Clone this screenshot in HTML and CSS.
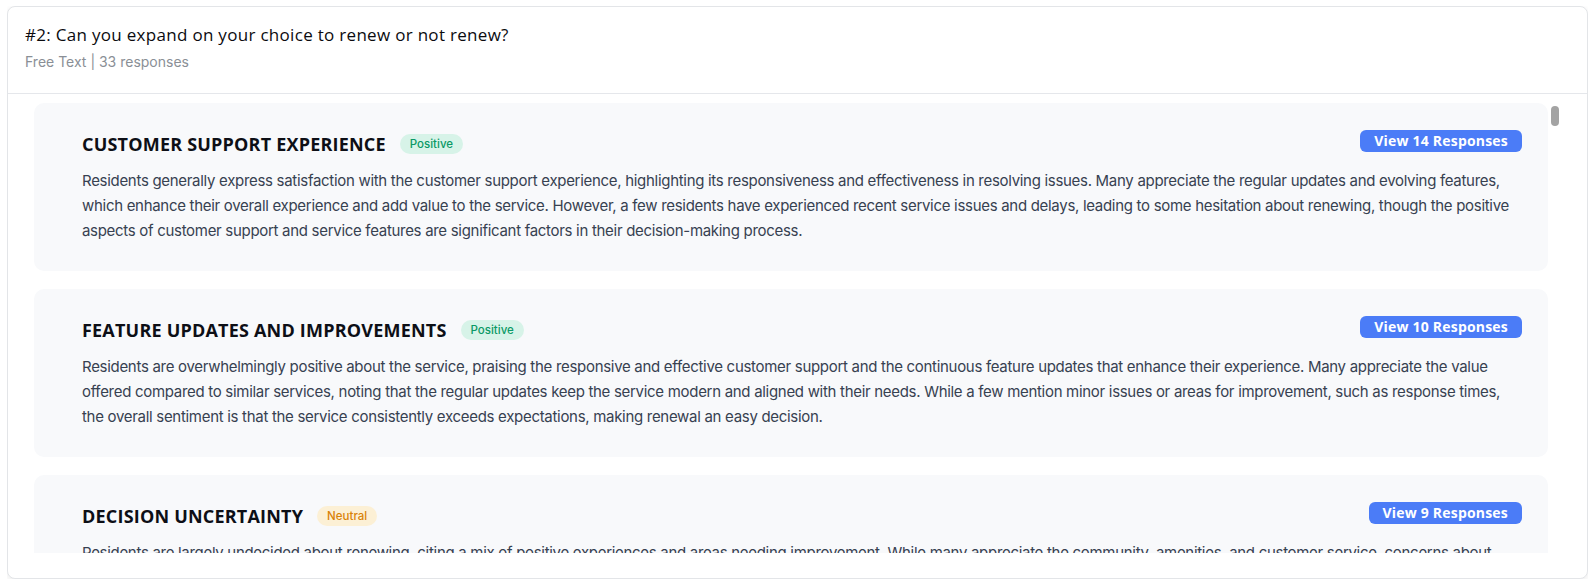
FILE: index.html
```html
<!DOCTYPE html>
<html lang="en">
<head>
<meta charset="utf-8">
<title>Question summary</title>
<link rel="stylesheet" href="styles.css">
</head>
<body>
<section class="panel">
  <header class="panel-head">
    <h2 class="question">#2: Can you expand on your choice to renew or not renew?</h2>
    <p class="meta">Free Text | 33 responses</p>
  </header>
  <div class="panel-body">
    <div class="scroll">
      <article class="theme">
        <div class="theme-row">
          <div class="theme-title">
            <h3>CUSTOMER SUPPORT EXPERIENCE</h3>
            <span class="badge badge-positive">Positive</span>
          </div>
          <button class="view-btn">View 14 Responses</button>
        </div>
        <p class="theme-text">Residents generally express satisfaction with the customer support experience, highlighting its responsiveness and effectiveness in resolving issues. Many appreciate the regular updates and evolving features, which enhance their overall experience and add value to the service. However, a few residents have experienced recent service issues and delays, leading to some hesitation about renewing, though the positive aspects of customer support and service features are significant factors in their decision-making process.</p>
      </article>
      <article class="theme">
        <div class="theme-row">
          <div class="theme-title">
            <h3>FEATURE UPDATES AND IMPROVEMENTS</h3>
            <span class="badge badge-positive">Positive</span>
          </div>
          <button class="view-btn">View 10 Responses</button>
        </div>
        <p class="theme-text">Residents are overwhelmingly positive about the service, praising the responsive and effective customer support and the continuous feature updates that enhance their experience. Many appreciate the value offered compared to similar services, noting that the regular updates keep the service modern and aligned with their needs. While a few mention minor issues or areas for improvement, such as response times, the overall sentiment is that the service consistently exceeds expectations, making renewal an easy decision.</p>
      </article>
      <article class="theme">
        <div class="theme-row">
          <div class="theme-title">
            <h3>DECISION UNCERTAINTY</h3>
            <span class="badge badge-neutral">Neutral</span>
          </div>
          <button class="view-btn">View 9 Responses</button>
        </div>
        <p class="theme-text">Residents are largely undecided about renewing, citing a mix of positive experiences and areas needing improvement. While many appreciate the community, amenities, and customer service, concerns about pricing, maintenance response times and recent changes leave them weighing their options before making a final decision.</p>
      </article>
    </div>
    <div class="thumb"></div>
  </div>
</section>
</body>
</html>
```

FILE: styles.css
```css
* { box-sizing: border-box; }

body {
  margin: 6px 7px;
  background: #ffffff;
  font-family: "Inter", "Liberation Sans", sans-serif;
  color: #111827;
}

.panel {
  height: 573px;
  border: 1px solid #e3e5e8;
  border-radius: 8px;
  background: #ffffff;
  box-shadow: 0 2px 6px rgba(0, 0, 0, 0.08);
  overflow: hidden;
}

.panel-head {
  padding: 16px 17px 21px;
  border-bottom: 1px solid #e5e7eb;
}

.question {
  margin: 0;
  font-family: "Open Sans", "DejaVu Sans", sans-serif;
  font-size: 17px;
  line-height: 24px;
  font-weight: 500;
  letter-spacing: 0.3px;
  color: #0b0b0f;
}

.meta {
  margin: 5px 0 0;
  font-size: 14px;
  line-height: 20px;
  color: #8a8f96;
}

.panel-body {
  position: relative;
  padding: 0 39px 25px 26px;
}

.scroll {
  height: 459px;
  overflow: hidden;
  padding-top: 9px;
  display: flex;
  flex-direction: column;
  gap: 18px;
}

.thumb {
  position: absolute;
  top: 12px;
  right: 28px;
  width: 8px;
  height: 20px;
  border-radius: 4px;
  background: #a3a3a3;
}

.theme {
  flex-shrink: 0;
  background: #f8f9fb;
  border-radius: 10px;
  padding: 27px 26px 28px 48px;
}

.theme-row {
  display: flex;
  align-items: flex-start;
  justify-content: space-between;
  height: 26px;
}

.theme-title {
  display: flex;
  align-items: center;
  gap: 14px;
  margin-top: 1px;
}

.theme-title h3 {
  margin: 0;
  font-family: "Open Sans", "DejaVu Sans", sans-serif;
  font-size: 18px;
  line-height: 26px;
  font-weight: 700;
  letter-spacing: 0.2px;
  color: #0d0f16;
}

.badge {
  display: inline-flex;
  align-items: center;
  height: 20px;
  padding: 0 10px;
  border-radius: 10px;
  font-size: 11.5px;
  font-weight: 500;
}

.badge-positive {
  background: #d7f3e8;
  color: #0b9966;
}

.badge-neutral {
  background: #fcf0d5;
  color: #d98207;
}

.view-btn {
  height: 22px;
  padding: 0 14px;
  border: 0;
  border-radius: 6px;
  background: #4b7cf7;
  color: #ffffff;
  font-family: "Open Sans", "DejaVu Sans", sans-serif;
  font-size: 14px;
  font-weight: 700;
  letter-spacing: 0.2px;
  line-height: 22px;
  cursor: pointer;
}

.theme-text {
  margin: 12px 0 0;
  font-size: 15px;
  line-height: 25px;
  letter-spacing: -0.3px;
  color: #374151;
}
```
